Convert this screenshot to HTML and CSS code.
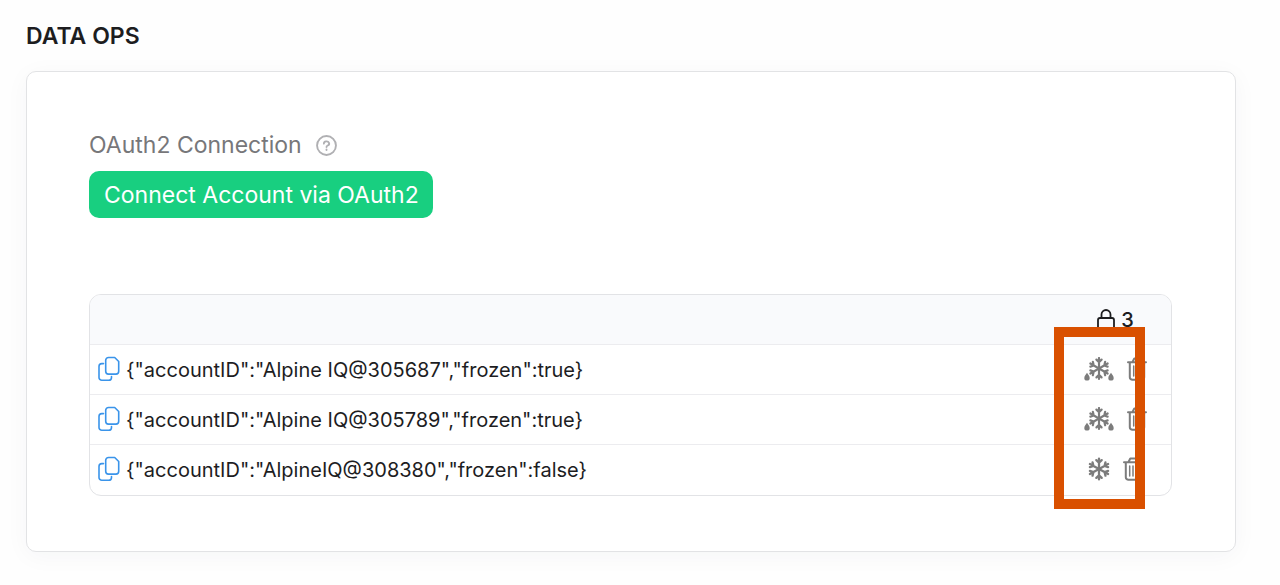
FILE: index.html
```html
<!DOCTYPE html>
<html lang="en">
<head>
  <meta charset="UTF-8" />
  <meta name="viewport" content="width=device-width, initial-scale=1.0" />
  <title>Data Ops</title>
  <link rel="stylesheet" href="styles.css">
</head>
<body>
  <!-- icon shapes shared by the rows -->
  <svg class="sprite" aria-hidden="true">
    <symbol id="copy" viewBox="0 0 22 26">
      <path d="M10.5 1.5h6.2l4 4v9.8a2.8 2.8 0 0 1-2.8 2.8h-7.4a2.8 2.8 0 0 1-2.8-2.8V4.3a2.8 2.8 0 0 1 2.8-2.8z"/>
      <path d="M5.5 7.6H3.8A2.8 2.8 0 0 0 1 10.4v11A2.8 2.8 0 0 0 3.8 24.2h6.9a2.8 2.8 0 0 0 2.8-2.8v-.9"/>
    </symbol>
    <symbol id="flake" viewBox="-11 -12 22 24">
      <g id="arms">
        <path id="a" d="M0 0v-10.400M-2.700-8.900 0-6.400l2.700-2.500"/>
        <use href="#a" transform="rotate(61)"/>
        <use href="#a" transform="rotate(119)"/>
        <use href="#a" transform="rotate(180)"/>
        <use href="#a" transform="rotate(241)"/>
        <use href="#a" transform="rotate(299)"/>
      </g>
    </symbol>
    <symbol id="thaw" viewBox="-15 -12 30 24">
      <use href="#arms" transform="translate(0 -.5) scale(.95 1)"/>
      <path class="drop" d="M-12 3.800c1 1.900 2.700 3.300 2.700 5.100a2.700 2.700 0 0 1-5.400 0c0-1.800 1.700-3.200 2.700-5.100z"/>
      <path class="drop" d="M12 3.800c1 1.900 2.700 3.300 2.700 5.100a2.700 2.700 0 0 1-5.400 0c0-1.800 1.700-3.200 2.700-5.100z"/>
    </symbol>
    <symbol id="trash" viewBox="0 0 20 24">
      <path d="M1 5.200h18M5.500 5 7.300 1.500h5.400L14.500 5M2.800 5.500v14.700a2.600 2.600 0 0 0 2.600 2.600h9.200a2.600 2.600 0 0 0 2.600-2.600V5.500"/>
      <path class="thin" d="M6.700 9v10M10 9v10M13.300 9v10"/>
    </symbol>
  </svg>

  <h1>DATA OPS</h1>

  <div class="card">
    <div class="label">
      OAuth2 Connection
      <svg class="help" viewBox="0 0 20 20" aria-hidden="true">
        <circle cx="10" cy="10" r="9"/>
        <path d="M7.500 8.200a2.500 2.100 0 1 1 3.700 1.800c-.8.400-1.200.7-1.200 1.500"/>
        <path d="M10 13.700v.6"/>
      </svg>
    </div>
    <button class="connect">Connect Account via OAuth2</button>

    <div class="table-wrap">
      <table>
        <thead>
          <tr>
            <th></th>
            <th class="actions">
              <div class="icons count">
                <svg class="lock" viewBox="0 0 18 22" aria-hidden="true">
                  <rect x="1" y="9" width="16" height="12" rx="2"/>
                  <path d="M4.500 9V5.500a4.500 4.500 0 0 1 9 0V9"/>
                </svg>
                3
              </div>
            </th>
          </tr>
        </thead>
        <tbody>
          <tr>
            <td>
              <div class="entry">
                <button class="icon-btn" aria-label="Copy"><svg class="copy"><use href="#copy"/></svg></button>
                <span>{"accountID":"Alpine IQ@305687","frozen":true}</span>
              </div>
            </td>
            <td>
              <div class="icons">
                <button class="icon-btn" aria-label="Unfreeze"><svg class="thaw"><use href="#thaw"/></svg></button>
                <button class="icon-btn" aria-label="Delete"><svg class="trash"><use href="#trash"/></svg></button>
              </div>
            </td>
          </tr>
          <tr>
            <td>
              <div class="entry">
                <button class="icon-btn" aria-label="Copy"><svg class="copy"><use href="#copy"/></svg></button>
                <span>{"accountID":"Alpine IQ@305789","frozen":true}</span>
              </div>
            </td>
            <td>
              <div class="icons">
                <button class="icon-btn" aria-label="Unfreeze"><svg class="thaw"><use href="#thaw"/></svg></button>
                <button class="icon-btn" aria-label="Delete"><svg class="trash"><use href="#trash"/></svg></button>
              </div>
            </td>
          </tr>
          <tr>
            <td>
              <div class="entry">
                <button class="icon-btn" aria-label="Copy"><svg class="copy"><use href="#copy"/></svg></button>
                <span>{"accountID":"AlpineIQ@308380","frozen":false}</span>
              </div>
            </td>
            <td>
              <div class="icons">
                <button class="icon-btn" aria-label="Freeze"><svg class="flake"><use href="#flake"/></svg></button>
                <button class="icon-btn" aria-label="Delete"><svg class="trash"><use href="#trash"/></svg></button>
              </div>
            </td>
          </tr>
        </tbody>
      </table>
      <div class="highlight"></div>
    </div>
  </div>
</body>
</html>
```

FILE: styles.css
```css
* {
  box-sizing: border-box;
}
body {
  font-family: Inter, "Liberation Sans", sans-serif;
  margin: 0;
  padding: 20px 44px 32px 26px;
  background: #fefefe;
  color: #1d1d1f;
}
.sprite {
  position: absolute;
  width: 0;
  height: 0;
}
h1 {
  margin: 0 0 19px;
  font-size: 23px;
  line-height: 32px;
  font-weight: 600;
}
.card {
  padding: 55px 63px 55px 62px;
  background: white;
  border: 1px solid #e2e3e5;
  border-radius: 10px;
  box-shadow: 0 4px 24px rgba(30, 40, 80, 0.04);
}
.label {
  display: flex;
  align-items: center;
  gap: 14px;
  margin-bottom: 8px;
  font-size: 23px;
  line-height: 36px;
  color: #77777a;
}
svg {
  display: block;
  fill: none;
  stroke-linecap: round;
  stroke-linejoin: round;
}
.help {
  width: 21px;
  height: 21px;
  stroke: #b0b0b3;
  stroke-width: 1.8;
}
.connect {
  display: block;
  height: 47px;
  padding: 0 14px 0 15px;
  border: none;
  border-radius: 10px;
  background: #18cf80;
  color: white;
  font-family: inherit;
  font-size: 23px;
  cursor: pointer;
}
.table-wrap {
  position: relative;
  margin-top: 76px;
  border: 1px solid #e2e3e6;
  border-radius: 12px;
}
table {
  width: 100%;
  border-collapse: separate;
  border-spacing: 0;
  font-size: 20px;
}
th, td {
  height: 50px;
  padding: 0;
  border-bottom: 1px solid #ececef;
}
tbody tr:last-child td {
  border-bottom: none;
}
th {
  background: #f9fafc;
  font-weight: 500;
}
th:first-child {
  border-top-left-radius: 11px;
}
th:last-child {
  border-top-right-radius: 11px;
}
.actions {
  width: 111px;
}
.entry {
  display: flex;
  align-items: center;
  gap: 6px;
  padding-left: 8px;
}
.icons {
  display: flex;
  align-items: center;
  justify-content: center;
  gap: 13px;
}
.count {
  gap: 6px;
}
.icon-btn {
  padding: 0 0 2px;
  border: none;
  background: none;
  cursor: pointer;
}
.lock {
  width: 18px;
  height: 22px;
  stroke: #1d1d1f;
  stroke-width: 1.8;
}
.copy {
  width: 22px;
  height: 26px;
  stroke: #3a94ea;
  stroke-width: 1.6;
}
.flake, .thaw {
  height: 24px;
  stroke: #7c7c7c;
  stroke-width: 2.3;
}
.flake {
  width: 22px;
}
.thaw {
  width: 30px;
}
.drop {
  fill: #7c7c7c;
  stroke: none;
}
.trash {
  width: 20px;
  height: 24px;
  stroke: #7c7c7c;
  stroke-width: 2;
}
.thin {
  stroke-width: 1.5;
}
/* frame around the freeze icons */
.highlight {
  position: absolute;
  top: 32px;
  right: 26px;
  bottom: -14px;
  width: 91px;
  border: 10px solid #d95000;
  pointer-events: none;
}
```
